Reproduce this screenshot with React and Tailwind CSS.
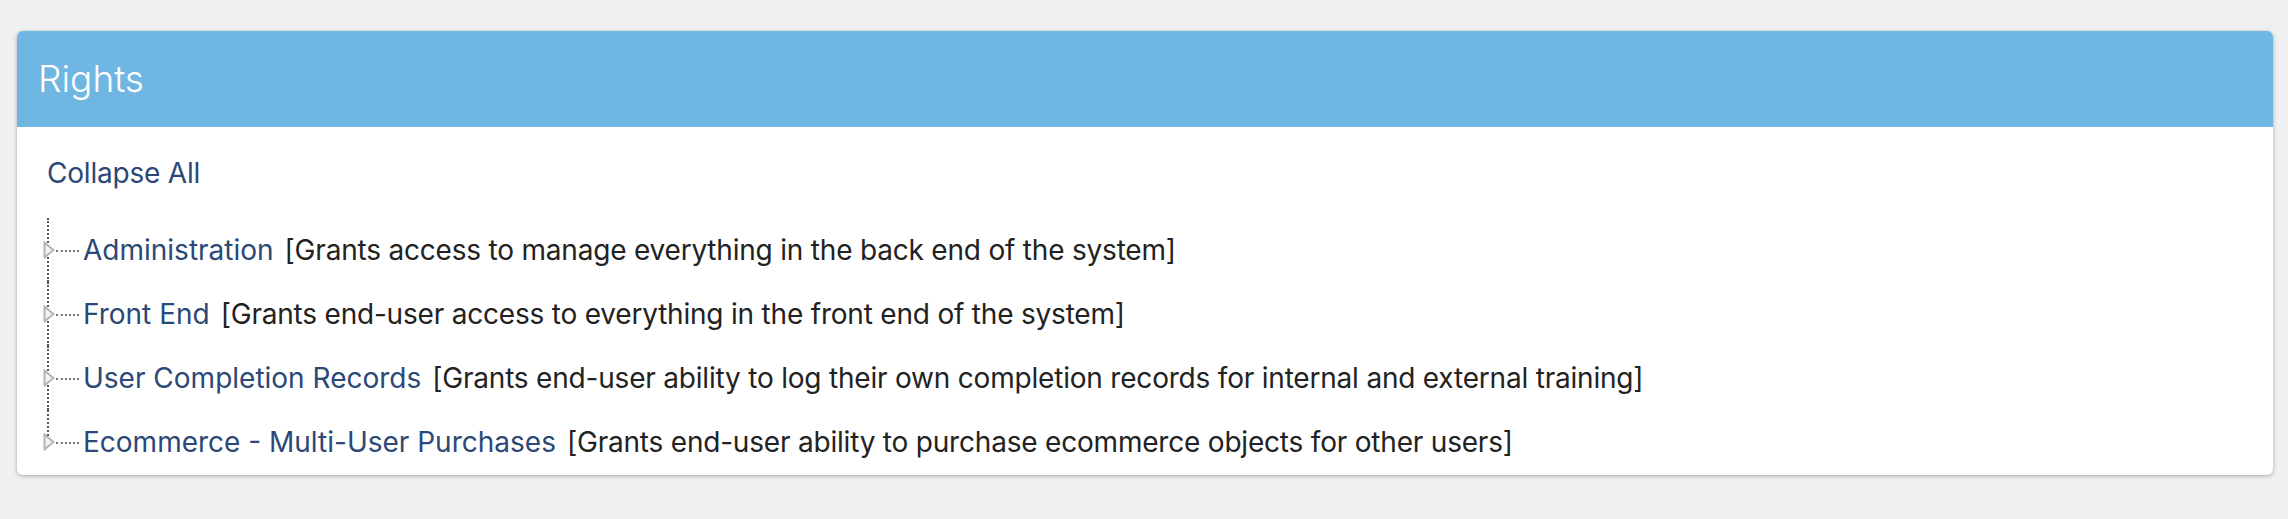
import React from 'react';

const rights = [
  { name: 'Administration', desc: 'Grants access to manage everything in the back end of the system' },
  { name: 'Front End', desc: 'Grants end-user access to everything in the front end of the system' },
  { name: 'User Completion Records', desc: 'Grants end-user ability to log their own completion records for internal and external training' },
  { name: 'Ecommerce - Multi-User Purchases', desc: 'Grants end-user ability to purchase ecommerce objects for other users' },
];

function Row({ name, desc, last }) {
  return (
    <li className="flex h-[64px] items-center">
      {/* tree connector */}
      <div className="relative h-full w-[36px] shrink-0">
        <div
          className={`absolute left-[0px] top-0 border-l-2 border-dotted border-[#555] ${last ? 'h-[26px]' : 'h-full'}`}
        />
        <svg className="absolute left-[-4px] top-[23px]" width="12" height="18" viewBox="0 0 12 18">
          <polygon points="1.5,1.5 10.5,9 1.5,16.5" fill="#f2f2f2" stroke="#b5b5b5" strokeWidth="2" />
        </svg>
        <div className="absolute left-[9px] top-[32px] w-[23px] border-t-2 border-dotted border-[#777]" />
      </div>
      <div className="flex items-baseline text-[28px] leading-none">
        <a href="#" className="text-[#2b4877]">{name}</a>
        <span className="ml-[11px] tracking-[-0.2px] text-[#222]">[{desc}]</span>
      </div>
    </li>
  );
}

export default function App() {
  return (
    <div className="min-h-[519px] bg-[#eff0f2] pt-[31px] pl-[17px] pr-[15px] font-['Inter',sans-serif]">
      <div className="rounded-[6px] bg-white shadow-[0_1px_4px_rgba(0,0,0,0.3)]">
        <div className="flex h-[96px] items-center rounded-t-[6px] bg-[#70b6e3] pl-[21px]">
          <h2 className="text-[37px] font-light text-white">Rights</h2>
        </div>
        <div className="pl-[30px] pb-[1px]">
          <div className="mt-[28px] h-[36px] text-[28px] leading-[36px] tracking-[-0.2px]">
            <a href="#" className="text-[#2b4877]">Collapse All</a>
          </div>
          <ul className="mt-[27px]">
            {rights.map((r, i) => (
              <Row key={r.name} {...r} last={i === rights.length - 1} />
            ))}
          </ul>
        </div>
      </div>
    </div>
  );
}
